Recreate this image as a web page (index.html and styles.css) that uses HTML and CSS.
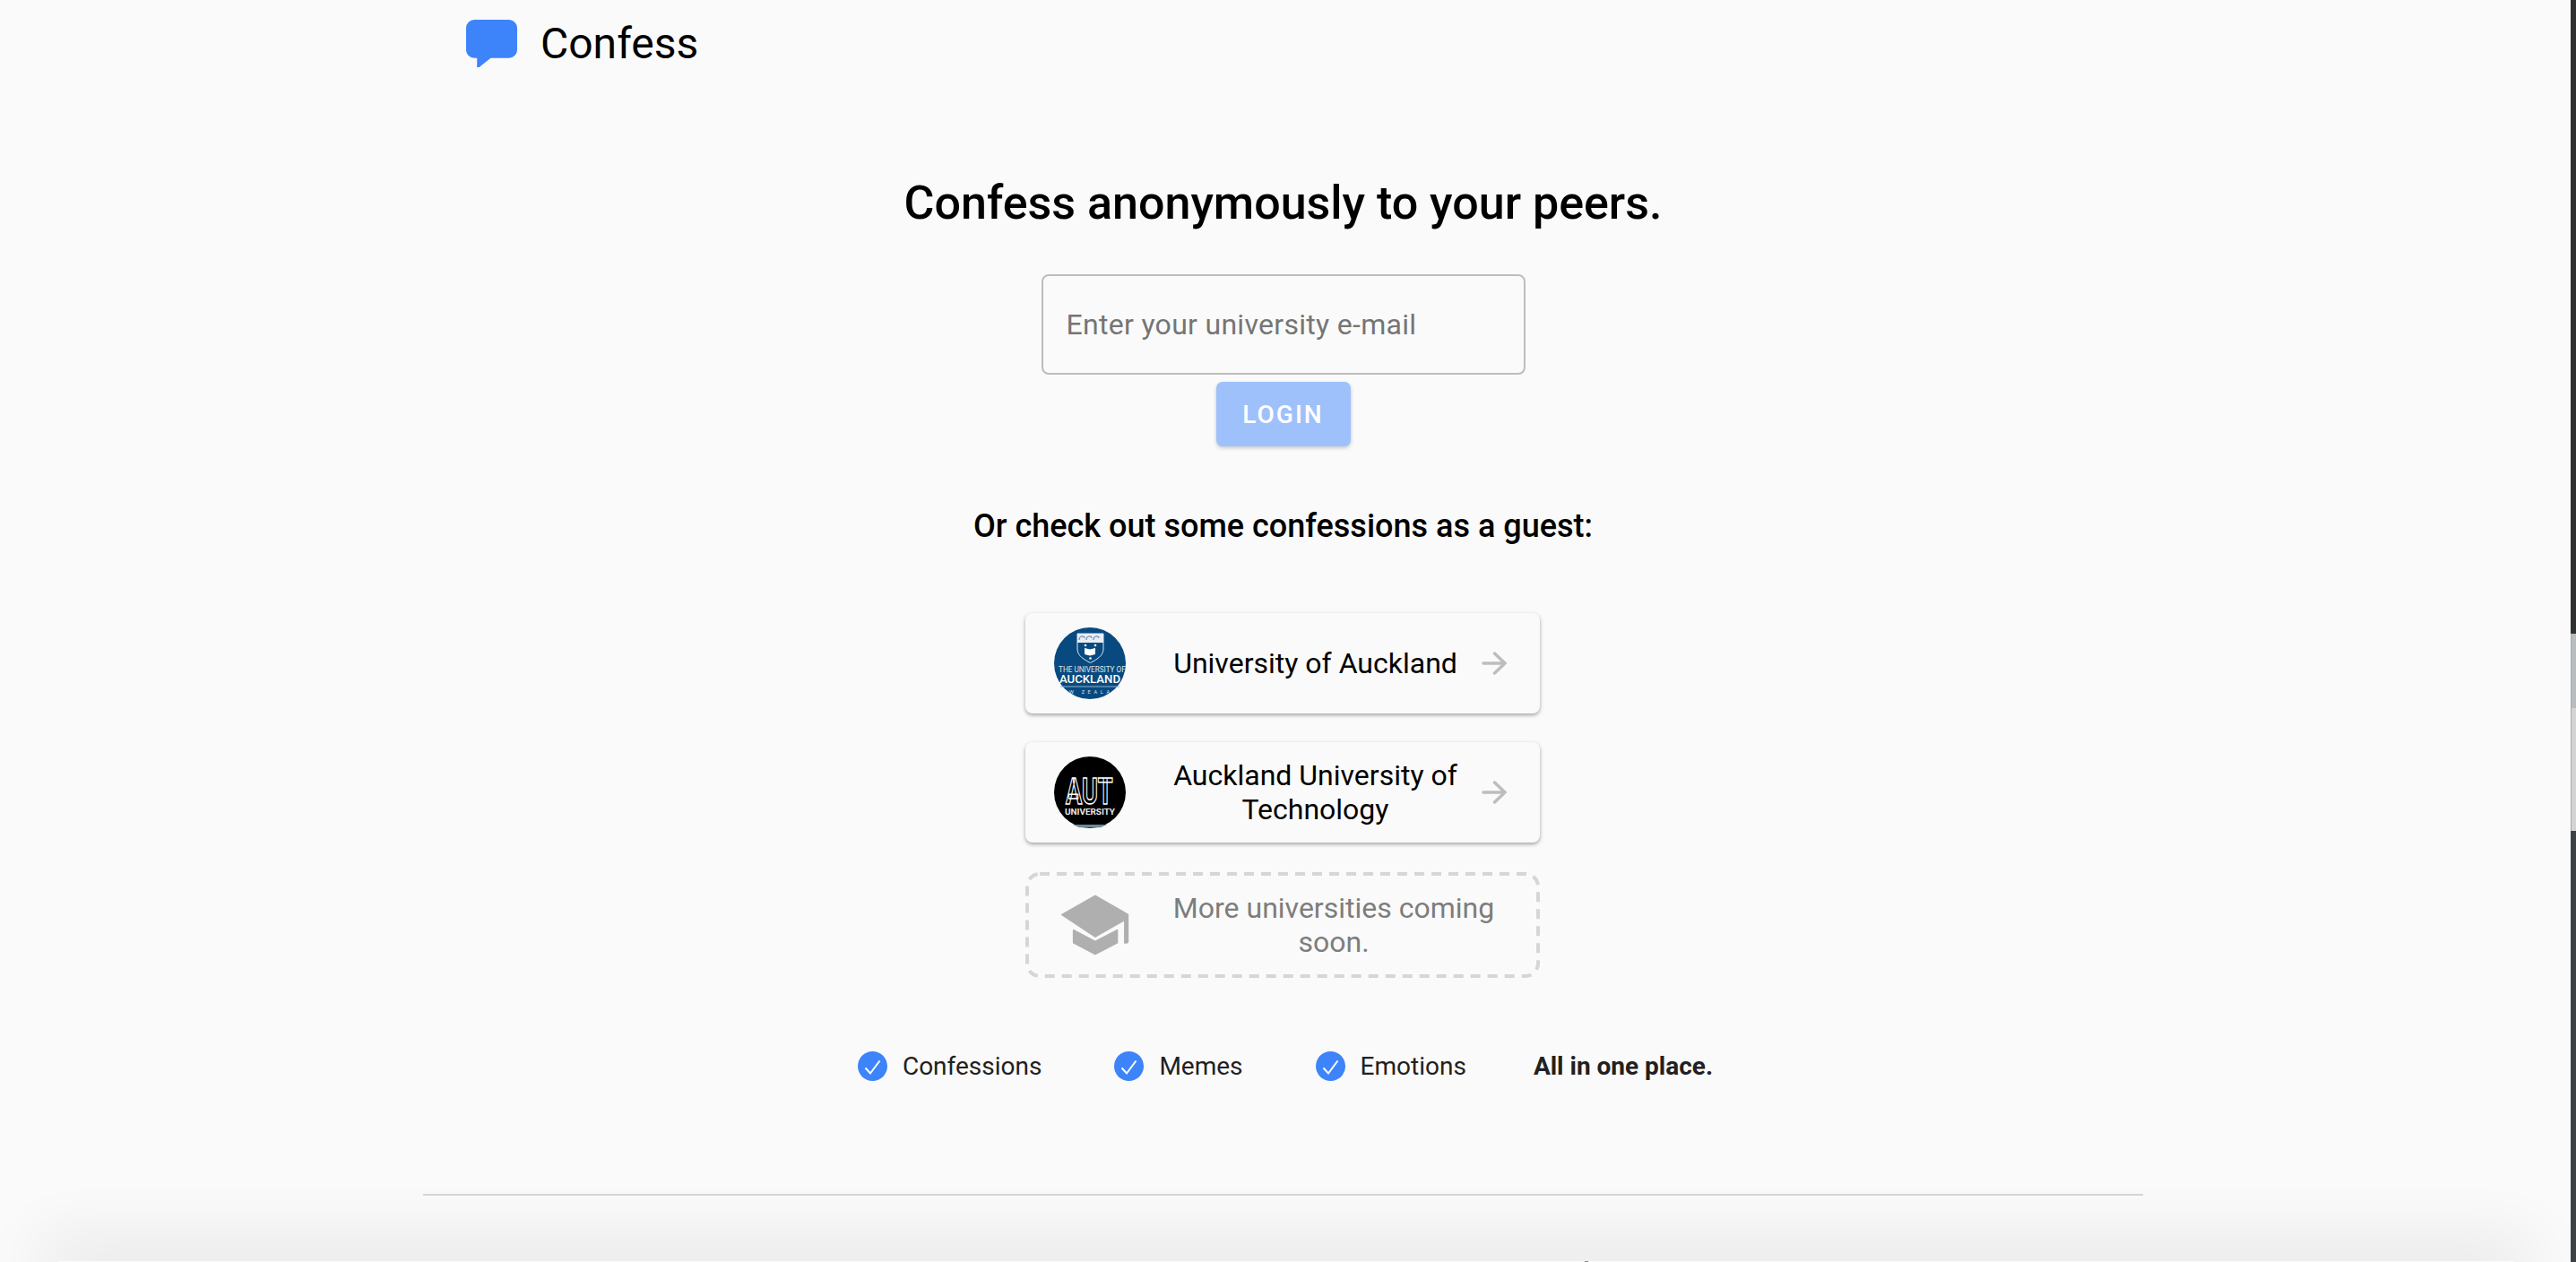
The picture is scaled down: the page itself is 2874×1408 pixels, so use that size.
FILE: index.html
```html
<!DOCTYPE html>
<html lang="en">
<head>
  <meta charset="UTF-8">
  <title>Confess</title>
  <link rel="stylesheet" href="styles.css">
</head>
<body>
  <div class="container">
    <header class="brand">
      <svg class="brand-icon" viewBox="0 0 56 52"><path fill="#3d84fb" d="M9 0h38a9 9 0 0 1 9 9v24a9 9 0 0 1-9 9H27L15 51.500a1.500 1.500 0 0 1-3-1V42H9a9 9 0 0 1-9-9V9a9 9 0 0 1 9-9z"/></svg>
      <span class="brand-name">Confess</span>
    </header>

    <main class="main">
      <h1>Confess anonymously to your peers.</h1>
      <input class="email" type="text" placeholder="Enter your university e-mail">
      <button class="login">LOGIN</button>
      <h2>Or check out some confessions as a guest:</h2>

      <a class="card">
        <svg class="avatar" viewBox="0 0 80 80">
          <circle cx="40" cy="40" r="40" fill="#084a80"/>
          <path d="M26 7H55V24C55 32 47 36 40.500 39.500C34 36 26 32 26 24Z" fill="#084a80" stroke="#dfe8f0" stroke-width="1"/>
          <rect x="26" y="7" width="29" height="10" fill="#e8eef4"/>
          <path d="M28 14c0-5 6-5 6-2M36 14c0-5 6-5 6-2M44 14c0-5 6-5 6-2" fill="none" stroke="#5f8bb0" stroke-width="1.200"/>
          <path d="M34 23l6 1.500 6-1.500v7l-6 1.500-6-1.500z" fill="#fff"/>
          <circle cx="35" cy="20" r="1.300" fill="#fff"/>
          <circle cx="46" cy="20" r="1.300" fill="#fff"/>
          <circle cx="40.500" cy="34.500" r="1.300" fill="#fff"/>
          <text class="uoa-small" x="5" y="49.500">THE UNIVERSITY OF</text>
          <text class="uoa-big" x="6" y="62" textLength="68" lengthAdjust="spacingAndGlyphs">AUCKLAND</text>
          <rect x="7" y="65.500" width="66" height="1" fill="#8fb0cc"/>
          <text class="uoa-tiny" x="17" y="74" textLength="45">W ZEALA</text>
        </svg>
        <span class="card-text">University of Auckland</span>
        <svg class="arrow" viewBox="0 0 28 26"><path d="M2 13H26M14.500 2 26 13 14.500 24" fill="none" stroke="#bdbdbd" stroke-width="3.500" stroke-linecap="round"/></svg>
      </a>

      <a class="card">
        <svg class="avatar" viewBox="0 0 80 80">
          <circle cx="40" cy="40" r="40" fill="#000"/>
          <path d="M21 76h38l-7 3.200H28z" fill="#6d8a94"/>
          <text class="aut-big" transform="translate(13 53) scale(.66 1)">AUT</text>
          <text class="aut-small" x="12" y="65" textLength="56" lengthAdjust="spacingAndGlyphs">UNIVERSITY</text>
        </svg>
        <span class="card-text">Auckland University of Technology</span>
        <svg class="arrow" viewBox="0 0 28 26"><path d="M2 13H26M14.500 2 26 13 14.500 24" fill="none" stroke="#bdbdbd" stroke-width="3.500" stroke-linecap="round"/></svg>
      </a>

      <div class="card card-soon">
        <svg class="dash" viewBox="0 0 574 118"><rect x="2" y="2" width="570" height="114" rx="14" fill="none" stroke="#d6d6d6" stroke-width="4" stroke-dasharray="11 8"/></svg>
        <svg class="cap" viewBox="155 146 194 199" preserveAspectRatio="none">
          <path d="M253 150 345 211V300Q345 304 340 304H336V229L253 284 159 212z" fill="#afafaf" stroke="#afafaf" stroke-width="4" stroke-linejoin="round"/>
          <path d="M192 262 253 299 315 262V304L253 341 192 304z" fill="#afafaf" stroke="#afafaf" stroke-width="4" stroke-linejoin="round"/>
        </svg>
        <span class="card-text">More universities coming soon.</span>
      </div>

      <ul class="features">
        <li><svg class="check" viewBox="0 0 33 33"><circle cx="16.500" cy="16.500" r="16.500" fill="#3d84fb"/><path d="M8.500 18.500l5.500 6 10.500-14" fill="none" stroke="#fff" stroke-width="2"/></svg>Confessions</li>
        <li><svg class="check" viewBox="0 0 33 33"><circle cx="16.500" cy="16.500" r="16.500" fill="#3d84fb"/><path d="M8.500 18.500l5.500 6 10.500-14" fill="none" stroke="#fff" stroke-width="2"/></svg>Memes</li>
        <li><svg class="check" viewBox="0 0 33 33"><circle cx="16.500" cy="16.500" r="16.500" fill="#3d84fb"/><path d="M8.500 18.500l5.500 6 10.500-14" fill="none" stroke="#fff" stroke-width="2"/></svg>Emotions</li>
        <li class="features-end">All in one place.</li>
      </ul>
    </main>

    <hr class="divider">
  </div>

  <div class="sheet"><div class="sheet-mark"></div></div>
  <div class="scrollbar"><div class="thumb"></div></div>
</body>
</html>
```

FILE: styles.css
```css
* {
  box-sizing: border-box;
}

html, body {
  margin: 0;
  height: 1408px;
  overflow: hidden;
}

body {
  background-color: #fafafa;
  color: #000;
  font-family: Roboto, sans-serif;
  padding-right: 11px;
  position: relative;
}

.container {
  width: 1919px;
  margin: 0 auto;
}

.brand {
  display: flex;
  align-items: center;
  gap: 26px;
  height: 96px;
  padding: 0 0 0 48px;
}

.brand-icon {
  width: 57px;
  height: 53px;
}

.brand-name {
  font-size: 48px;
}

.main {
  display: flex;
  flex-direction: column;
  align-items: center;
}

h1 {
  font-size: 52px;
  font-weight: 500;
  line-height: 64px;
  margin: 99px 0 0;
}

.email {
  width: 540px;
  height: 112px;
  margin-top: 47px;
  padding: 0 26px;
  border: 2px solid #bdbdbd;
  border-radius: 8px;
  background: transparent;
  font-family: inherit;
  font-size: 32px;
  letter-spacing: 0.300px;
}

.email::placeholder {
  color: #757575;
}

.login {
  width: 150px;
  height: 72px;
  margin-top: 8px;
  border: 0;
  border-radius: 7px;
  background-color: #9fc1fb;
  color: #fff;
  font-family: inherit;
  font-size: 28px;
  font-weight: 500;
  letter-spacing: 2px;
  box-shadow: 0 2px 4px rgba(0, 0, 0, 0.2);
}

h2 {
  font-size: 36px;
  font-weight: 500;
  line-height: 44px;
  margin: 67px 0 75px;
}

.card {
  display: flex;
  align-items: center;
  width: 574px;
  height: 112px;
  margin: 0 2px 32px 0;
  padding: 0 37px 0 32px;
  border-radius: 8px;
  box-shadow: 0 2px 4px rgba(0, 0, 0, 0.35);
}

.avatar {
  flex: none;
  width: 80px;
  height: 80px;
  margin-right: 50px;
}

.card-text {
  flex: 1;
  font-size: 32px;
  line-height: 38px;
  text-align: center;
}

.arrow {
  flex: none;
  width: 28px;
  height: 26px;
  margin-left: 23px;
}

.card-soon {
  position: relative;
  height: 118px;
  margin: 1px 2px 0 0;
  padding: 0 48px 0 39px;
  border-radius: 14px;
  box-shadow: none;
  color: #7d7d7d;
}

.dash {
  position: absolute;
  left: 0;
  top: 0;
  width: 574px;
  height: 118px;
}

.cap {
  flex: none;
  width: 77px;
  height: 68px;
  margin-right: 47px;
}

.uoa-small {
  font-size: 8.200px;
  fill: #dbe6ef;
}

.uoa-big {
  font-size: 12px;
  font-weight: 500;
  fill: #fff;
}

.uoa-tiny {
  font-size: 5.500px;
  fill: #dbe6ef;
}

.aut-big {
  font-size: 41px;
  font-weight: 700;
  fill: #000;
  stroke: #fff;
  stroke-width: 1.500;
}

.aut-small {
  font-size: 8.500px;
  font-weight: 700;
  fill: #e8e8e8;
}

.features {
  display: flex;
  align-items: center;
  gap: 81px;
  list-style: none;
  margin: 82px 0 0 5px;
  padding: 0;
  font-size: 28px;
  color: #212121;
}

.features li {
  display: flex;
  align-items: center;
  gap: 17px;
}

.features .features-end {
  font-weight: 700;
  margin-left: -6px;
}

.check {
  width: 33px;
  height: 33px;
}

.divider {
  height: 2px;
  margin: 126px 0 0;
  border: 0;
  background-color: #d6d6d6;
}

/* only the shadow of this strip shows, it hugs the bottom edge */
.sheet {
  position: absolute;
  left: 65px;
  right: 69px;
  bottom: 0;
  height: 1px;
  box-shadow: 0 0 70px 20px rgba(0, 0, 0, 0.1);
}

.sheet-mark {
  position: absolute;
  left: 1703px;
  top: 0;
  width: 4px;
  height: 1px;
  background-color: #8a8a8a;
}

.scrollbar {
  position: absolute;
  top: 0;
  right: 0;
  bottom: 0;
  width: 6px;
  background: linear-gradient(#2e3130 707px, #3f4244 707px);
}

.thumb {
  height: 220px;
  margin-top: 707px;
  border-left: 1px solid #a8a8a8;
  background: linear-gradient(#b9bcbf 83px, #d4d4d4 83px);
}
```
